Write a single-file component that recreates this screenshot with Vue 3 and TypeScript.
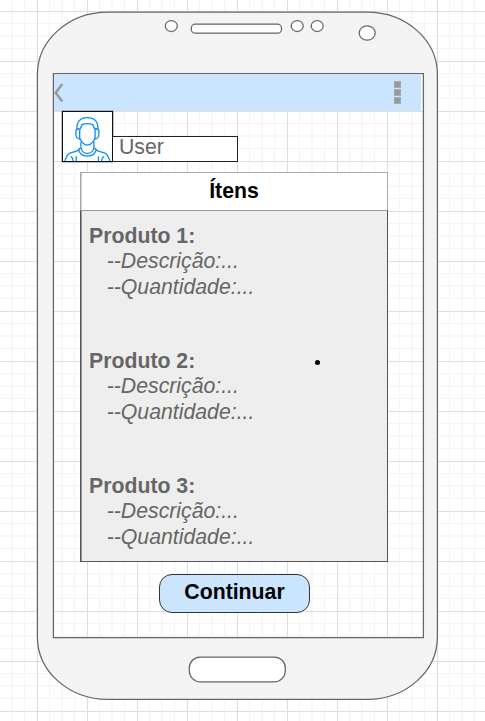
<script setup lang="ts">
interface Product {
  name: string
  lines: string[]
}

const products: Product[] = [1, 2, 3].map((n) => ({
  name: `Produto ${n}:`,
  lines: ['--Descrição:...', '--Quantidade:...'],
}))
</script>

<template>
  <main class="canvas">
    <svg class="device" viewBox="0 0 485 721" fill="#fff" stroke="#666" stroke-width="1.25" aria-hidden="true">
      <path
        fill="#f4f4f4"
        fill-rule="evenodd"
        d="M37.4 74.5C37.4 40 69 12.1 108 12.1H367C406 12.1 437.4 40 437.4 74.5V637C437.4 671.5 406 699.4 367 699.4H108C69 699.4 37.4 671.5 37.4 637ZM53.4 73.6V637.5H423.4V73.6Z"
      />
      <ellipse cx="171.3" cy="26" rx="6" ry="5.5" />
      <rect x="191.3" y="24.2" width="90.2" height="9" rx="4" />
      <ellipse cx="297.2" cy="26" rx="6" ry="5.5" />
      <ellipse cx="317.2" cy="26" rx="6" ry="5.5" />
      <ellipse cx="367.2" cy="33" rx="8" ry="7.2" />
      <rect x="189.3" y="657" width="96" height="24.8" rx="11" />
    </svg>

    <section class="screen">
      <header class="appbar">
        <svg class="back" width="10" height="20" viewBox="0 0 10 20" aria-hidden="true">
          <path d="M8.3 1L1.7 9.8L8.3 18.5" fill="none" stroke="#999" stroke-width="2.5" />
        </svg>
        <span class="menu"><i v-for="n in 3" :key="n" /></span>
      </header>

      <div class="profile">
        <div class="avatar">
          <svg width="49" height="49" viewBox="0 0 49 49" fill="none" stroke="#0c8cf5" stroke-width="1.3" aria-hidden="true">
            <path d="M14 17.500C13.300 9.500 17.500 5.700 24.400 5.700C31.300 5.700 35.500 9.500 34.800 17.500" />
            <path d="M16.700 26V18L19.200 12.400Q24.400 11 29.600 12.400L32.100 18V26C30 30.500 27.700 33.100 24.400 33.200C21.100 33.100 18.800 30.500 16.700 26Z" />
            <path d="M16.700 16.800Q13.500 16.300 12.900 19V23Q13.500 26.800 17 27M32.100 16.800Q35.300 16.300 35.900 19V23Q35.300 26.800 31.800 27" />
            <path d="M17.900 29.500V35.500Q18.800 41.300 24.400 41.400Q30 41.300 30.900 35.500V29.500" />
            <path d="M17.500 36.200L15.600 37.200Q16.500 44 24.400 44.200Q32.300 44 33.200 37.200L31.300 36.200" />
            <path d="M15.600 38.200C12 40 8.500 40.200 5.700 41.700Q3.300 44 1.800 49M33.200 38.200C36.800 40 40.300 40.200 43.100 41.700Q45.500 44 47 49" />
            <path d="M7.800 44.300Q10.100 46 10.100 49M13.300 44.300V49M35.500 44.300V49M41 44.300Q38.700 46 38.700 49" />
          </svg>
        </div>
        <div class="username">User</div>
      </div>

      <section class="items">
        <h1 class="items-title">Ítens</h1>
        <div class="items-body">
          <article v-for="product in products" :key="product.name" class="product">
            <h2>{{ product.name }}</h2>
            <p v-for="line in product.lines" :key="line">{{ line }}</p>
          </article>
          <span class="point" />
        </div>
      </section>

      <button class="continue" type="button">Continuar</button>
    </section>
  </main>
</template>

<style>
body {
  margin: 0;
  overflow: hidden;
}
</style>

<style scoped>
.canvas {
  position: relative;
  box-sizing: border-box;
  width: 485px;
  height: 721px;
  padding: 74px 0 0 54px;
  overflow: hidden;
  font-family: "Liberation Sans", Arial, sans-serif;
  font-size: 21.25px;
  line-height: 25.5px;
  color: #666;
  background-color: #fff;
  background-image:
    linear-gradient(to right, #dedede 1px, transparent 1px),
    linear-gradient(to bottom, #dedede 1px, transparent 1px),
    linear-gradient(to right, transparent 12px, #f5f5f5 12px, #f5f5f5 13px, transparent 13px, transparent 24px, #f8f8f8 24px, #f8f8f8 26px, transparent 26px, transparent 37px, #f5f5f5 37px, #f5f5f5 38px, transparent 38px),
    linear-gradient(to bottom, transparent 12px, #f5f5f5 12px, #f5f5f5 13px, transparent 13px, transparent 24px, #f8f8f8 24px, #f8f8f8 26px, transparent 26px, transparent 37px, #f5f5f5 37px, #f5f5f5 38px, transparent 38px);
  background-size: 50px 50px;
  background-position: 37px 11px;
}

.device {
  position: absolute;
  inset: 0;
  width: 485px;
  height: 721px;
}

.screen {
  position: relative;
  display: flex;
  flex-direction: column;
  width: 369px;
  height: 563px;
}

.appbar {
  display: flex;
  justify-content: space-between;
  box-sizing: border-box;
  width: 367px;
  height: 37px;
  padding: 7px 20px 0 0;
  background: #cce5ff;
}

.back {
  margin-top: 2px;
}

.menu {
  display: flex;
  flex-direction: column;
  gap: 1px;
}

.menu i {
  box-sizing: border-box;
  width: 7px;
  height: 7px;
  background: #999;
  border: 1px solid #a3a8ad;
}

.profile {
  display: flex;
  align-items: flex-end;
  margin-left: 8px;
}

.avatar {
  box-sizing: border-box;
  width: 51px;
  height: 51px;
  background: #fff;
  border: 1px solid #111;
  box-shadow: 0 0 0 0.3px #444;
}

.avatar svg {
  display: block;
}

.username {
  box-sizing: border-box;
  width: 125px;
  height: 26px;
  padding-left: 6px;
  line-height: 21px;
  background: #fff;
  border: 1px solid #222;
  border-left: 0;
}

.items {
  box-sizing: border-box;
  width: 308px;
  margin: 10px 0 0 26px;
}

.items-title {
  box-sizing: border-box;
  height: 38px;
  margin: 0;
  font-size: inherit;
  line-height: 37px;
  text-align: center;
  color: #000;
  background: #fff;
  border: 1px solid #aaa;
  border-bottom: 0;
  box-shadow: inset 1px 0 #ccc;
}

.items-body {
  position: relative;
  box-sizing: border-box;
  height: 352px;
  padding: 12.5px 0 0 8px;
  background: #eee;
  border: 1px solid #555;
  border-top-color: #999;
  box-shadow: inset 1px 0 #999;
}

.product {
  height: 125px;
}

.product h2,
.product p {
  margin: 0;
  font-size: inherit;
}

.product p {
  padding-left: 17.7px;
  font-style: italic;
}

.point {
  position: absolute;
  left: 234px;
  top: 149px;
  width: 5px;
  height: 5px;
  background: #000;
  border-radius: 50%;
}

.continue {
  box-sizing: border-box;
  width: 151px;
  height: 39px;
  margin: 12px 0 0 105px;
  padding: 0 0 2px;
  font: bold 21.25px/25.5px "Liberation Sans", Arial, sans-serif;
  color: #000;
  background: #cce5ff;
  border: 1px solid #333;
  border-radius: 13px;
}
</style>
